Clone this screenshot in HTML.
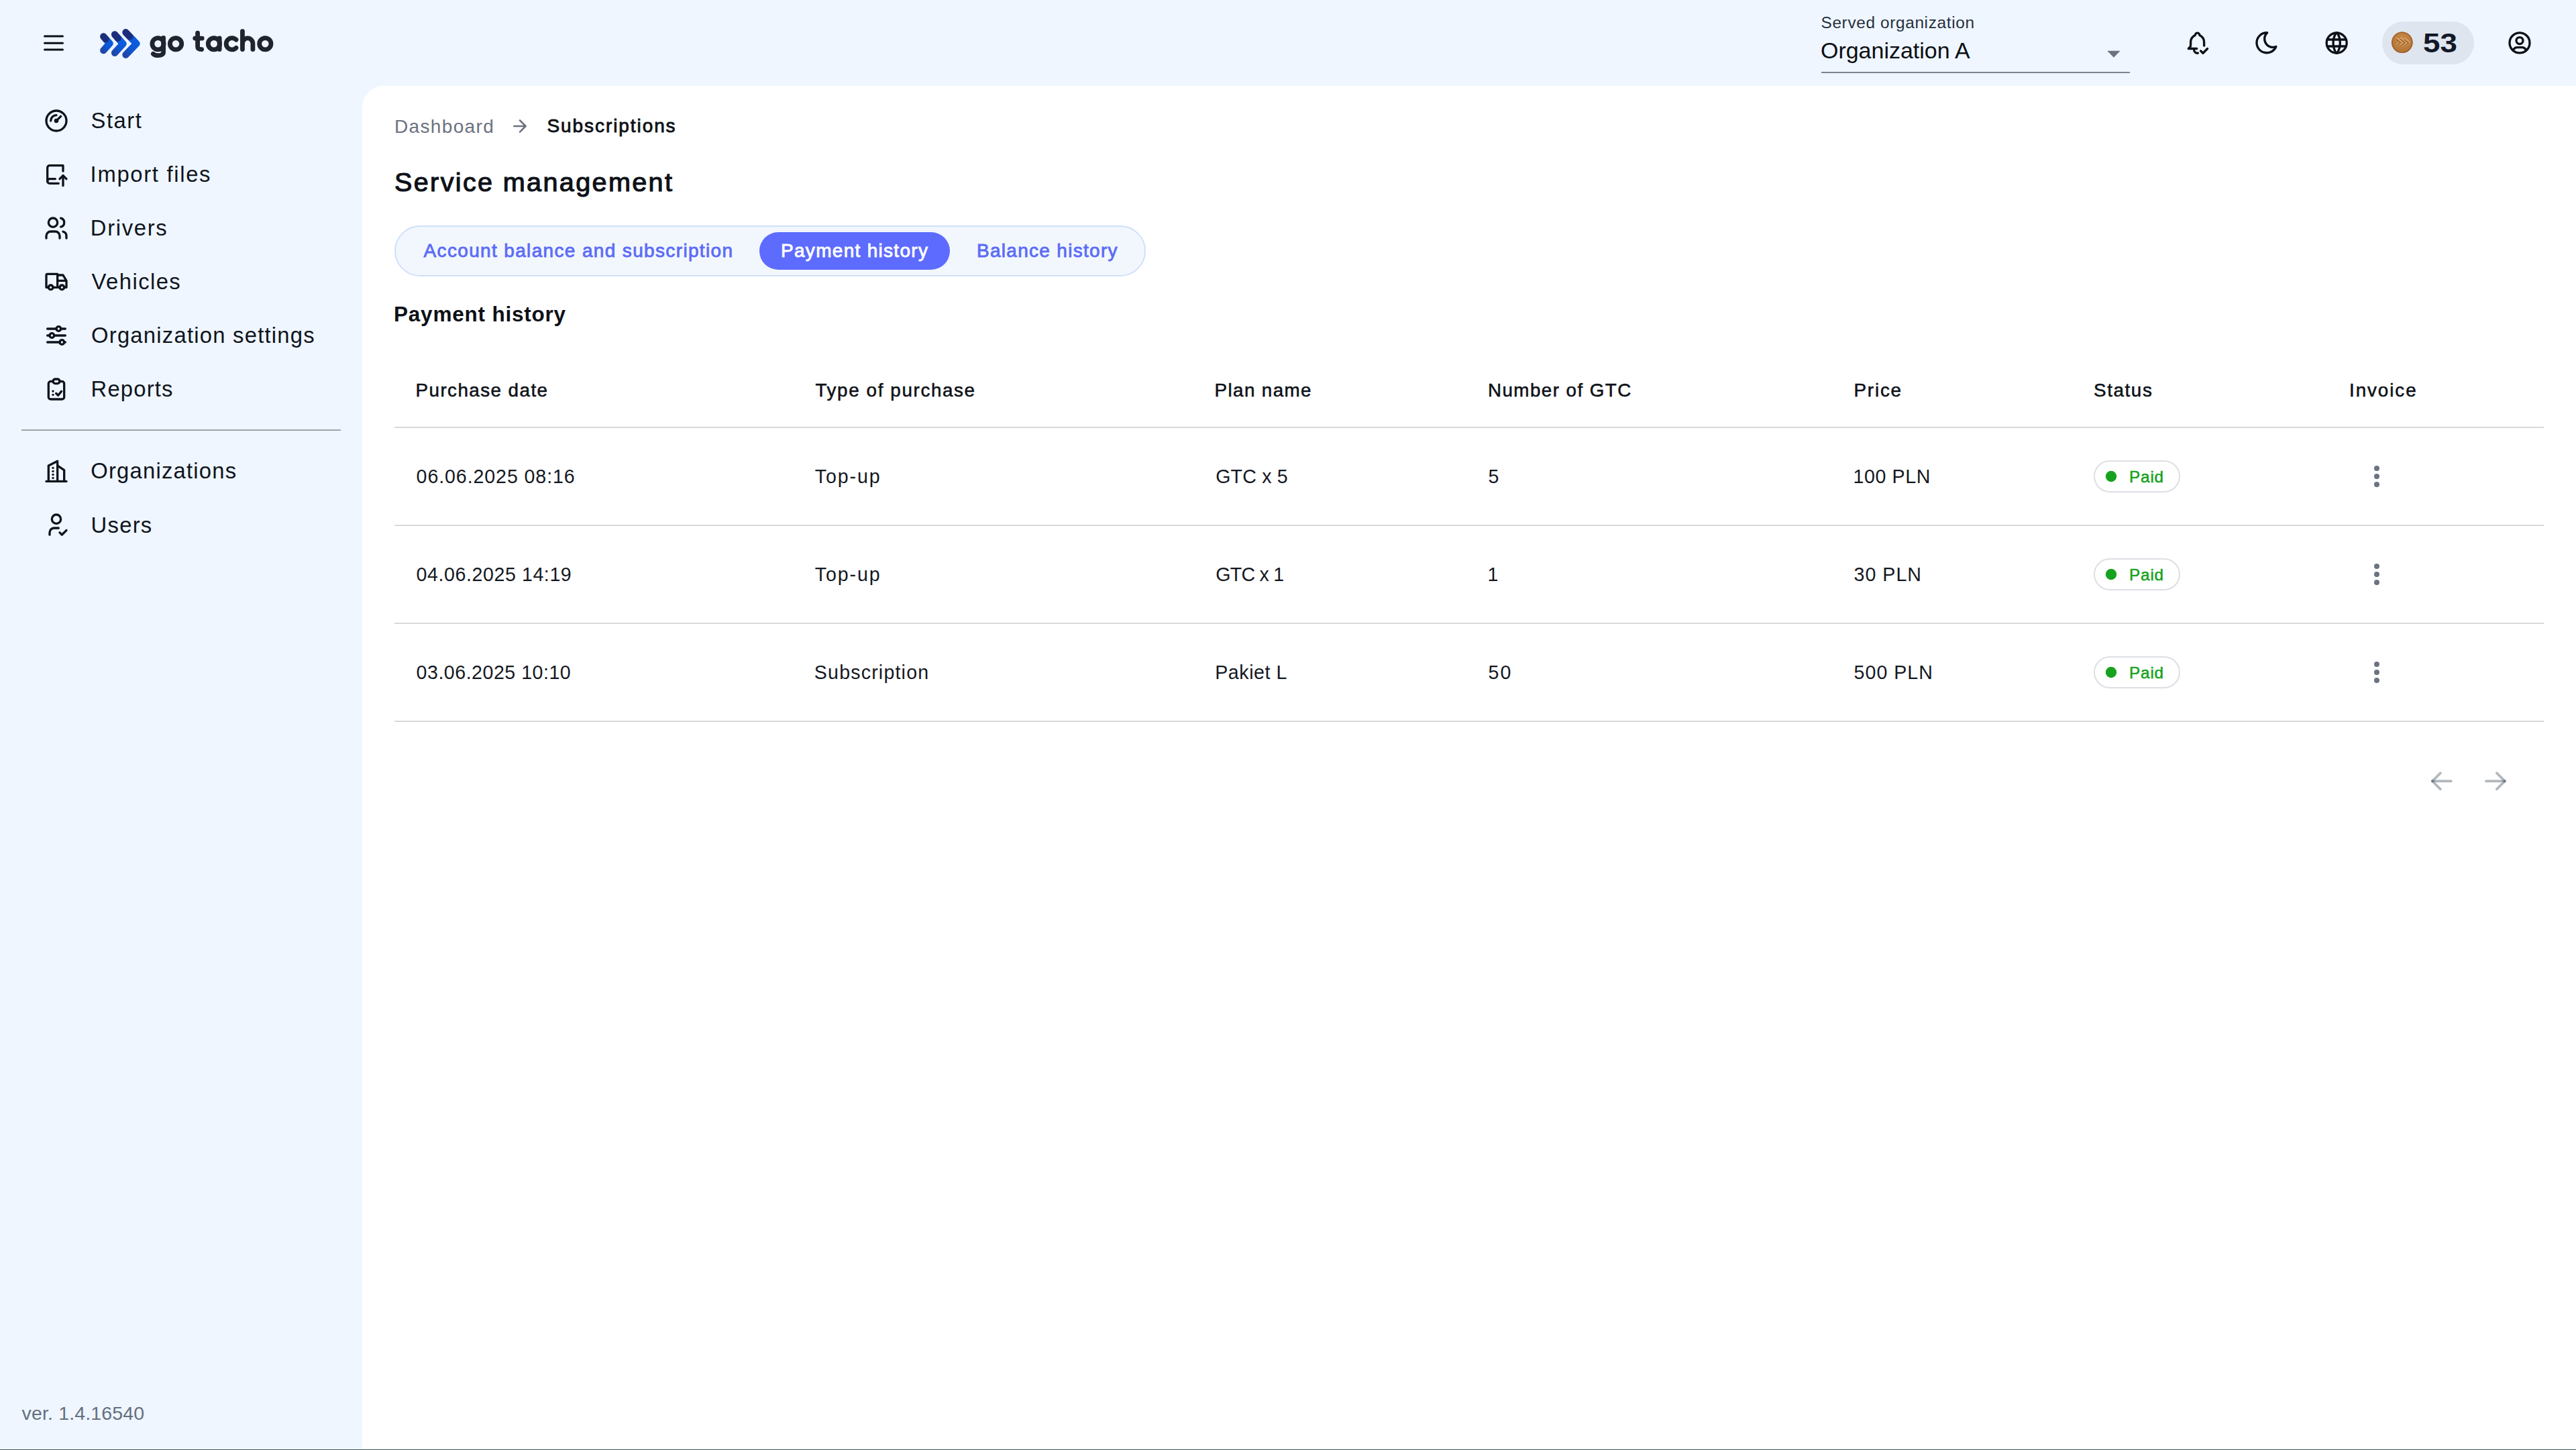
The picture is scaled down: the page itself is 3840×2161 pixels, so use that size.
<!DOCTYPE html>
<html><head><meta charset="utf-8"><title>go tacho</title>
<style>
html,body{margin:0;padding:0;}
body{width:3840px;height:2161px;position:relative;overflow:hidden;background:#eff6ff;font-family:"Liberation Sans",sans-serif;}
.t{position:absolute;line-height:1;white-space:pre;}
.b{position:absolute;}
.ov{position:absolute;left:0;top:0;}
</style></head><body>
<div class="b" style="left:540px;top:128px;width:3300px;height:2033px;background:#fff;border-top-left-radius:32px"></div>
<div class="b" style="left:32px;top:640px;width:476px;height:2px;background:#9fa4aa"></div>
<div class="b" style="left:2715px;top:107px;width:460px;height:2px;background:#7e848d"></div>
<div class="b" style="left:3551px;top:32px;width:137px;height:64px;border-radius:32px;background:#dfe5ee"></div>
<div class="b" style="left:588px;top:336px;width:1120px;height:76px;box-sizing:border-box;border:2px solid #cfe0fb;border-radius:38px;background:#f2f7fe"></div>
<div class="b" style="left:1132px;top:346px;width:284px;height:56px;border-radius:28px;background:#5d6bfe"></div>
<div class="b" style="left:588px;top:636px;width:3204px;height:2px;background:#d9d9d9"></div><div class="b" style="left:588px;top:782px;width:3204px;height:2px;background:#d9d9d9"></div><div class="b" style="left:588px;top:928px;width:3204px;height:2px;background:#d9d9d9"></div><div class="b" style="left:588px;top:1074px;width:3204px;height:2px;background:#d9d9d9"></div><div class="b" style="left:3121px;top:686px;width:129px;height:48px;box-sizing:border-box;border:2px solid #dcdfe4;border-radius:24px"></div><div class="b" style="left:3121px;top:832px;width:129px;height:48px;box-sizing:border-box;border:2px solid #dcdfe4;border-radius:24px"></div><div class="b" style="left:3121px;top:978px;width:129px;height:48px;box-sizing:border-box;border:2px solid #dcdfe4;border-radius:24px"></div>
<div class="b" style="left:0;top:2160px;width:3840px;height:1px;background:#3f555b"></div>
<svg class="ov" width="3840" height="2161" viewBox="0 0 3840 2161"><defs><linearGradient id="lg0" gradientUnits="userSpaceOnUse" x1="154.3" y1="75.1" x2="163.45" y2="64.8"><stop offset="0" stop-color="#1f48ad"/><stop offset="0.55" stop-color="#0d57d4"/><stop offset="1" stop-color="#0b5cdc"/></linearGradient><linearGradient id="lg1" gradientUnits="userSpaceOnUse" x1="171.1" y1="78.8" x2="183.4" y2="65.3"><stop offset="0" stop-color="#1f48ad"/><stop offset="0.55" stop-color="#0d57d4"/><stop offset="1" stop-color="#0b5cdc"/></linearGradient><linearGradient id="lg2" gradientUnits="userSpaceOnUse" x1="187.5" y1="81.7" x2="203.5" y2="65.0"><stop offset="0" stop-color="#1f48ad"/><stop offset="0.55" stop-color="#0d57d4"/><stop offset="1" stop-color="#0b5cdc"/></linearGradient><radialGradient id="coin" cx="0.5" cy="0.35" r="0.7"><stop offset="0" stop-color="#c68a48"/><stop offset="1" stop-color="#b07233"/></radialGradient></defs><g transform="translate(64 160) scale(1.6666666666666667)" fill="none" stroke="#0f141c" stroke-width="2" stroke-linecap="round" stroke-linejoin="round" ><path d="M12 12m-9 0a9 9 0 1 0 18 0a9 9 0 1 0 -18 0"/><path d="M12 12m-1 0a1 1 0 1 0 2 0a1 1 0 1 0 -2 0"/><path d="M13.41 10.59l2.59 -2.59"/><path d="M7 12a5 5 0 0 1 5 -5"/></g><g transform="translate(64 240) scale(1.6666666666666667)" fill="none" stroke="#0f141c" stroke-width="2" stroke-linecap="round" stroke-linejoin="round" ><path d="M14 20h-8a2 2 0 0 1 -2 -2v-12a2 2 0 0 1 2 -2h12v5"/><path d="M11 16h-5a2 2 0 0 0 -2 2"/><path d="M15 16l3 -3l3 3"/><path d="M18 13v9"/></g><g transform="translate(64 320) scale(1.6666666666666667)" fill="none" stroke="#0f141c" stroke-width="2" stroke-linecap="round" stroke-linejoin="round" ><path d="M9 7m-4 0a4 4 0 1 0 8 0a4 4 0 1 0 -8 0"/><path d="M3 21v-2a4 4 0 0 1 4 -4h4a4 4 0 0 1 4 4v2"/><path d="M16 3.13a4 4 0 0 1 0 7.75"/><path d="M21 21v-2a4 4 0 0 0 -3 -3.85"/></g><g transform="translate(64 400) scale(1.6666666666666667)" fill="none" stroke="#0f141c" stroke-width="2" stroke-linecap="round" stroke-linejoin="round" ><path d="M7 17m-2 0a2 2 0 1 0 4 0a2 2 0 1 0 -4 0"/><path d="M17 17m-2 0a2 2 0 1 0 4 0a2 2 0 1 0 -4 0"/><path d="M5 17h-2v-11a1 1 0 0 1 1 -1h9v12m-4 0h6m4 0h2v-6h-8m0 -5h5l3 5"/></g><g transform="translate(64 480) scale(1.6666666666666667)" fill="none" stroke="#0f141c" stroke-width="2" stroke-linecap="round" stroke-linejoin="round" ><path d="M14 6m-2 0a2 2 0 1 0 4 0a2 2 0 1 0 -4 0"/><path d="M4 6l8 0"/><path d="M16 6l4 0"/><path d="M8 12m-2 0a2 2 0 1 0 4 0a2 2 0 1 0 -4 0"/><path d="M4 12l2 0"/><path d="M10 12l10 0"/><path d="M17 18m-2 0a2 2 0 1 0 4 0a2 2 0 1 0 -4 0"/><path d="M4 18l11 0"/><path d="M19 18l1 0"/></g><g transform="translate(64 560) scale(1.6666666666666667)" fill="none" stroke="#0f141c" stroke-width="2" stroke-linecap="round" stroke-linejoin="round" ><path d="M9 5h-2a2 2 0 0 0 -2 2v12a2 2 0 0 0 2 2h10a2 2 0 0 0 2 -2v-12a2 2 0 0 0 -2 -2h-2"/><path d="M9 5a2 2 0 0 1 2 -2h2a2 2 0 0 1 2 2a2 2 0 0 1 -2 2h-2a2 2 0 0 1 -2 -2z"/><path d="M9 13.8v.01"/><path d="M9 17v.01"/><path d="M11.8 15.8l1.8 1.7l3 -3.6"/></g><g transform="translate(64 682.3) scale(1.6666666666666667)" fill="none" stroke="#0f141c" stroke-width="2" stroke-linecap="round" stroke-linejoin="round" ><path d="M3 21l18 0"/><path d="M5 21v-14l8 -4v18"/><path d="M19 21v-10l-6 -4"/><path d="M9 9l0 .01"/><path d="M9 12l0 .01"/><path d="M9 15l0 .01"/><path d="M9 18l0 .01"/></g><g transform="translate(64 762) scale(1.6666666666666667)" fill="none" stroke="#0f141c" stroke-width="2" stroke-linecap="round" stroke-linejoin="round" ><path d="M8 7a4 4 0 1 0 8 0a4 4 0 0 0 -8 0"/><path d="M6 21v-2a4 4 0 0 1 4 -4h4"/><path d="M15 19l2 2l4 -4"/></g><g transform="translate(3255.6 44.2) scale(1.6666666666666667)" fill="none" stroke="#0d1117" stroke-width="2" stroke-linecap="round" stroke-linejoin="round" ><path d="M11.5 17h-7.5a4 4 0 0 0 2 -3v-3a7 7 0 0 1 4 -6a2 2 0 1 1 4 0a7 7 0 0 1 4 6v3c.016 .129 .037 .256 .065 .382"/><path d="M9 17v1a3 3 0 0 0 3.51 2.957"/><path d="M15 19l2 2l4 -4"/></g><g transform="translate(3359.0 43.75) scale(1.6666666666666667)" fill="none" stroke="#0d1117" stroke-width="2" stroke-linecap="round" stroke-linejoin="round" ><path d="M12 3c.132 0 .263 0 .393 0a7.5 7.5 0 0 0 7.92 12.446a9 9 0 1 1 -8.313 -12.454z"/></g><g transform="translate(3463.2 44) scale(1.6666666666666667)" fill="none" stroke="#0d1117" stroke-width="2" stroke-linecap="round" stroke-linejoin="round" ><path d="M3 12a9 9 0 1 0 18 0a9 9 0 0 0 -18 0"/><path d="M3.6 9h16.8"/><path d="M3.6 15h16.8"/><path d="M11.5 3a17 17 0 0 0 0 18"/><path d="M12.5 3a17 17 0 0 1 0 18"/></g><g transform="translate(3736 43.9) scale(1.6666666666666667)" fill="none" stroke="#0d1117" stroke-width="2" stroke-linecap="round" stroke-linejoin="round" ><path d="M12 12m-9 0a9 9 0 1 0 18 0a9 9 0 1 0 -18 0"/><path d="M12 10m-3 0a3 3 0 1 0 6 0a3 3 0 1 0 -6 0"/><path d="M6.168 18.849a4 4 0 0 1 3.832 -2.849h4a4 4 0 0 1 3.834 2.855"/></g><g transform="translate(3615.9 1140.1) scale(2)" fill="none" stroke="#4b5563" stroke-width="1.85" stroke-linecap="round" stroke-linejoin="round"><path d="M5 12l14 0" stroke-opacity="0.42"/><path d="M5 12l6 6" stroke-opacity="0.42"/><path d="M5 12l6 -6" stroke-opacity="0.42"/></g><g transform="translate(3695.9 1140.1) scale(2)" fill="none" stroke="#4b5563" stroke-width="1.85" stroke-linecap="round" stroke-linejoin="round"><path d="M5 12l14 0" stroke-opacity="0.42"/><path d="M13 18l6 -6" stroke-opacity="0.42"/><path d="M13 6l6 6" stroke-opacity="0.42"/></g><path d="M766.3 188H783 M775 179.3L783.6 188L775 196.7" fill="none" stroke="#6b7280" stroke-width="2.6" stroke-linecap="round" stroke-linejoin="round"/><path d="M66.5 54H93.5M66.5 64.2H93.5M66.5 74H93.5" fill="none" stroke="#0d1117" stroke-width="3" stroke-linecap="round"/><g fill="none" stroke-width="10.4" stroke-linecap="round" stroke-linejoin="round"><path d="M154.3 75.1L163.45 64.8L158.42 59.13" stroke="url(#lg0)"/><path d="M154.3 54.5L157.59 58.21" stroke="#1b2e7c"/><path d="M171.1 78.8L183.4 65.3L176.63 57.71" stroke="url(#lg1)"/><path d="M171.1 51.5L175.53 56.47" stroke="#1b2e7c"/><path d="M187.5 81.7L203.5 65.0L194.70 55.81" stroke="url(#lg2)"/><path d="M187.5 48.3L193.26 54.31" stroke="#1b2e7c"/></g><g fill="none" stroke="#20242e" stroke-width="6.8" stroke-linecap="round" stroke-linejoin="round"><path d="M235.5 65.25m-8.6 0a8.6 8.6 0 1 0 17.2 0a8.6 8.6 0 1 0 -17.2 0"/><path d="M243.6 56.5V77.5C243.6 81 240.5 82.7 236 82.7C232.8 82.7 230.3 81.9 228.4 80.3"/><path d="M262.05 65.25m-8.65 0a8.65 8.65 0 1 0 17.3 0a8.65 8.65 0 1 0 -17.3 0"/><path d="M294.6 49.2V69.5C294.6 72.3 296.3 73.6 300.6 73.6"/><path d="M290.7 57.1H301.2"/><path d="M318.9 65.25m-8.65 0a8.65 8.65 0 1 0 17.3 0a8.65 8.65 0 1 0 -17.3 0"/><path d="M327.2 57V73.6"/><path d="M352.0 59.2A8.65 8.65 0 1 0 352.0 71.3"/><path d="M361.45 46.6V73.6"/><path d="M361.45 65A7.7 8 0 0 1 376.9 65V73.6"/><path d="M395.35 65.25m-8.65 0a8.65 8.65 0 1 0 17.3 0a8.65 8.65 0 1 0 -17.3 0"/></g><path d="M3141.2 75.8H3160.6L3150.9 85.8Z" fill="#6b7280"/><g>
<circle cx="3580.85" cy="63.3" r="15.8" fill="url(#coin)"/>
<circle cx="3580.85" cy="63.3" r="15.0" fill="none" stroke="#9a5a2a" stroke-width="1.6" stroke-opacity="0.8"/>
<g fill="none" stroke-linecap="round" stroke-linejoin="round">
<path d="M3573 57.6L3579.2 62.6L3572.5 67.8M3579.2 57.4L3585.8 62.4L3578.8 68.2M3585.2 58L3591.2 63.4L3584.6 68.6" stroke="#d9a262" stroke-width="3.6"/>
<path d="M3572.2 58.4L3578 63M3578.4 58.2L3584.6 63M3584.4 58.8L3590 63.8M3572 68.5L3578.6 63.5M3578.2 68.9L3585 63.5M3584 69.3L3590.6 64" stroke="#8a4b22" stroke-width="1.3" stroke-opacity="0.85"/>
</g></g><circle cx="3543" cy="698" r="4" fill="#6b7280"/><circle cx="3543" cy="710" r="4" fill="#6b7280"/><circle cx="3543" cy="722" r="4" fill="#6b7280"/><circle cx="3147" cy="710" r="8.2" fill="#16a21f"/><circle cx="3543" cy="844" r="4" fill="#6b7280"/><circle cx="3543" cy="856" r="4" fill="#6b7280"/><circle cx="3543" cy="868" r="4" fill="#6b7280"/><circle cx="3147" cy="856" r="8.2" fill="#16a21f"/><circle cx="3543" cy="990" r="4" fill="#6b7280"/><circle cx="3543" cy="1002" r="4" fill="#6b7280"/><circle cx="3543" cy="1014" r="4" fill="#6b7280"/><circle cx="3147" cy="1002" r="8.2" fill="#16a21f"/></svg>
<span class="t" style="left:2714.5px;top:22.3px;font-size:24.40px;letter-spacing:0.64px;font-weight:400;color:#27303d;">Served organization</span>
<span class="t" style="left:2714.0px;top:58.4px;font-size:34.00px;letter-spacing:-0.02px;font-weight:400;color:#0d0f14;">Organization A</span>
<span class="t" style="left:3612.4px;top:44.1px;font-size:41.00px;letter-spacing:0.00px;font-weight:700;color:#111827;transform:scaleX(1.1166);transform-origin:0 0;">53</span>
<span class="t" style="left:135.5px;top:164.2px;font-size:32.80px;letter-spacing:1.50px;font-weight:400;color:#0f141c;">Start</span>
<span class="t" style="left:134.6px;top:243.8px;font-size:32.80px;letter-spacing:1.68px;font-weight:400;color:#0f141c;">Import files</span>
<span class="t" style="left:134.8px;top:323.6px;font-size:32.80px;letter-spacing:1.67px;font-weight:400;color:#0f141c;">Drivers</span>
<span class="t" style="left:136.6px;top:403.8px;font-size:32.80px;letter-spacing:1.43px;font-weight:400;color:#0f141c;">Vehicles</span>
<span class="t" style="left:136.0px;top:483.8px;font-size:32.80px;letter-spacing:1.23px;font-weight:400;color:#0f141c;">Organization settings</span>
<span class="t" style="left:135.6px;top:563.8px;font-size:32.80px;letter-spacing:1.17px;font-weight:400;color:#0f141c;">Reports</span>
<span class="t" style="left:135.2px;top:685.8px;font-size:32.80px;letter-spacing:1.21px;font-weight:400;color:#0f141c;">Organizations</span>
<span class="t" style="left:135.6px;top:766.6px;font-size:32.80px;letter-spacing:1.25px;font-weight:400;color:#0f141c;">Users</span>
<span class="t" style="left:32.6px;top:2091.9px;font-size:28.50px;letter-spacing:0.15px;font-weight:400;color:#647080;">ver. 1.4.16540</span>
<span class="t" style="left:588.0px;top:175.3px;font-size:28.00px;letter-spacing:1.34px;font-weight:400;color:#6b7280;">Dashboard</span>
<span class="t" style="left:815.5px;top:174.3px;font-size:28.00px;letter-spacing:1.92px;font-weight:400;color:#0d1117;-webkit-text-stroke:0.85px #0d1117;">Subscriptions</span>
<span class="t" style="left:588.0px;top:252.0px;font-size:39.60px;letter-spacing:2.35px;font-weight:400;color:#0d1117;-webkit-text-stroke:1.15px #0d1117;">Service management</span>
<span class="t" style="left:631.5px;top:359.8px;font-size:28.00px;letter-spacing:1.35px;font-weight:400;color:#5b6cf5;-webkit-text-stroke:0.85px #5b6cf5;">Account balance and subscription</span>
<span class="t" style="left:1164.0px;top:359.8px;font-size:28.00px;letter-spacing:1.30px;font-weight:400;color:#ffffff;-webkit-text-stroke:0.85px #ffffff;">Payment history</span>
<span class="t" style="left:1456.0px;top:359.8px;font-size:28.00px;letter-spacing:1.29px;font-weight:400;color:#5b6cf5;-webkit-text-stroke:0.85px #5b6cf5;">Balance history</span>
<span class="t" style="left:587.0px;top:452.8px;font-size:31.50px;letter-spacing:0.79px;font-weight:700;color:#0d1117;">Payment history</span>
<span class="t" style="left:619.5px;top:567.5px;font-size:27.80px;letter-spacing:1.44px;font-weight:400;color:#0d1117;-webkit-text-stroke:0.55px #0d1117;">Purchase date</span>
<span class="t" style="left:1215.5px;top:567.5px;font-size:27.80px;letter-spacing:1.62px;font-weight:400;color:#0d1117;-webkit-text-stroke:0.55px #0d1117;">Type of purchase</span>
<span class="t" style="left:1810.6px;top:567.5px;font-size:27.80px;letter-spacing:1.38px;font-weight:400;color:#0d1117;-webkit-text-stroke:0.55px #0d1117;">Plan name</span>
<span class="t" style="left:2218.0px;top:567.5px;font-size:27.80px;letter-spacing:1.42px;font-weight:400;color:#0d1117;-webkit-text-stroke:0.55px #0d1117;">Number of GTC</span>
<span class="t" style="left:2763.5px;top:567.5px;font-size:27.80px;letter-spacing:1.81px;font-weight:400;color:#0d1117;-webkit-text-stroke:0.55px #0d1117;">Price</span>
<span class="t" style="left:3121.0px;top:567.5px;font-size:27.80px;letter-spacing:1.60px;font-weight:400;color:#0d1117;-webkit-text-stroke:0.55px #0d1117;">Status</span>
<span class="t" style="left:3502.0px;top:567.5px;font-size:27.80px;letter-spacing:1.92px;font-weight:400;color:#0d1117;-webkit-text-stroke:0.55px #0d1117;">Invoice</span>
<span class="t" style="left:620.6px;top:695.6px;font-size:28.60px;letter-spacing:0.90px;font-weight:400;color:#14181f;">06.06.2025 08:16</span>
<span class="t" style="left:1214.8px;top:695.6px;font-size:28.60px;letter-spacing:1.90px;font-weight:400;color:#14181f;">Top-up</span>
<span class="t" style="left:1812.2px;top:695.6px;font-size:28.60px;letter-spacing:0.17px;font-weight:400;color:#14181f;">GTC x 5</span>
<span class="t" style="left:2218.6px;top:695.6px;font-size:28.60px;letter-spacing:0.00px;font-weight:400;color:#14181f;">5</span>
<span class="t" style="left:2762.6px;top:695.6px;font-size:28.60px;letter-spacing:0.58px;font-weight:400;color:#14181f;">100 PLN</span>
<span class="t" style="left:620.6px;top:841.6px;font-size:28.60px;letter-spacing:0.57px;font-weight:400;color:#14181f;">04.06.2025 14:19</span>
<span class="t" style="left:1214.8px;top:841.6px;font-size:28.60px;letter-spacing:1.90px;font-weight:400;color:#14181f;">Top-up</span>
<span class="t" style="left:1812.2px;top:841.6px;font-size:28.60px;letter-spacing:-0.75px;font-weight:400;color:#14181f;">GTC x 1</span>
<span class="t" style="left:2217.6px;top:841.6px;font-size:28.60px;letter-spacing:0.00px;font-weight:400;color:#14181f;">1</span>
<span class="t" style="left:2763.6px;top:841.6px;font-size:28.60px;letter-spacing:1.00px;font-weight:400;color:#14181f;">30 PLN</span>
<span class="t" style="left:620.6px;top:987.6px;font-size:28.60px;letter-spacing:0.50px;font-weight:400;color:#14181f;">03.06.2025 10:10</span>
<span class="t" style="left:1213.8px;top:987.6px;font-size:28.60px;letter-spacing:1.18px;font-weight:400;color:#14181f;">Subscription</span>
<span class="t" style="left:1811.2px;top:987.6px;font-size:28.60px;letter-spacing:0.57px;font-weight:400;color:#14181f;">Pakiet L</span>
<span class="t" style="left:2218.6px;top:987.6px;font-size:28.60px;letter-spacing:2.00px;font-weight:400;color:#14181f;">50</span>
<span class="t" style="left:2763.6px;top:987.6px;font-size:28.60px;letter-spacing:1.00px;font-weight:400;color:#14181f;">500 PLN</span>
<span class="t" style="left:3174.0px;top:698.6px;font-size:24.30px;letter-spacing:0.83px;font-weight:400;color:#17a21f;-webkit-text-stroke:0.55px #17a21f;">Paid</span>
<span class="t" style="left:3174.0px;top:844.6px;font-size:24.30px;letter-spacing:0.83px;font-weight:400;color:#17a21f;-webkit-text-stroke:0.55px #17a21f;">Paid</span>
<span class="t" style="left:3174.0px;top:990.6px;font-size:24.30px;letter-spacing:0.83px;font-weight:400;color:#17a21f;-webkit-text-stroke:0.55px #17a21f;">Paid</span>
</body></html>
